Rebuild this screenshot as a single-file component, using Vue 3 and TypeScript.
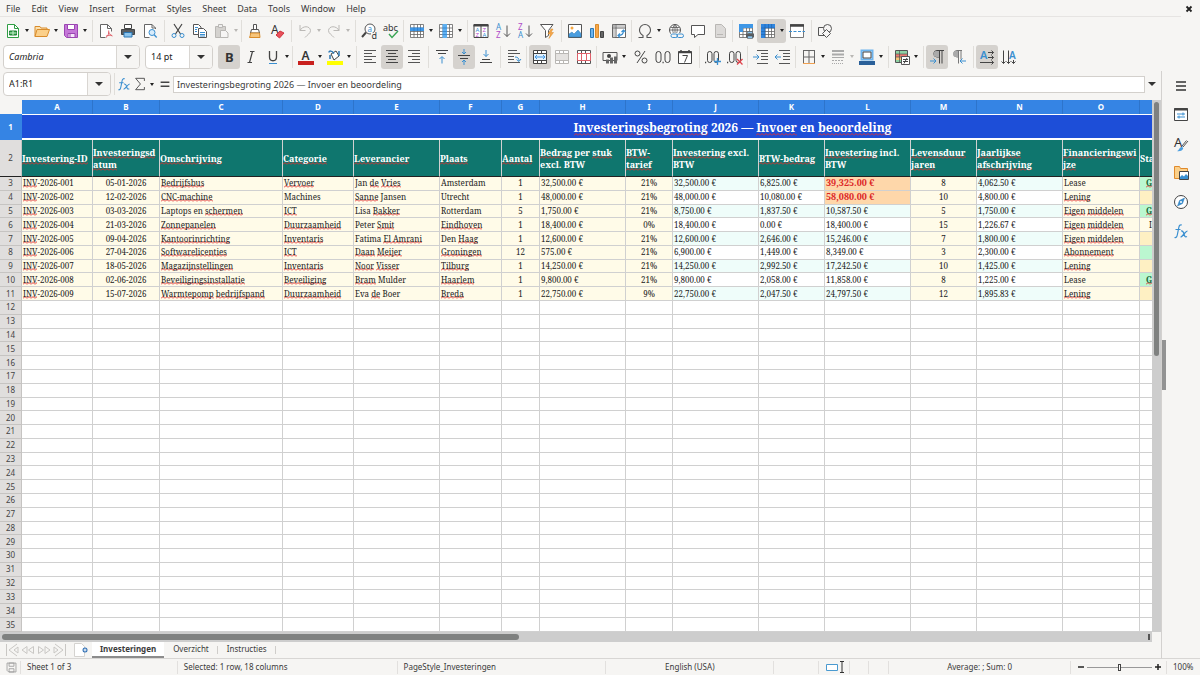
<script setup lang="ts">
interface Tool {
  icon?: string
  label?: string
  arrow?: boolean
  active?: boolean
  dim?: boolean
  sep?: number
}
interface Piece {
  text: string
  bad: boolean
}
interface Cell {
  text: string
  cls: string
}

const menus = ['File', 'Edit', 'View', 'Insert', 'Format', 'Styles', 'Sheet', 'Data', 'Tools', 'Window', 'Help']

const grid = (fill = '') =>
  '<path d="M1.5 1.5h13v13h-13z" fill="#fff"/><path d="M1.5 1.500h13v13h-13zM1.500 5h13M1.500 8.500h13M1.500 11.500h13M5 1.500v13M8.500 1.500v13M11.500 1.500v13" stroke="#666" stroke-width=".8"/>' + fill
const mergeGrid = (c: string, mid: string) =>
  `<path d="M1.5 1.5h13v13h-13zM1.5 4.5h13M1.5 11.5h13M5.5 1.5v3M9.5 1.5v3M5.5 11.5v3M9.5 11.5v3" fill="#fff" stroke="${c}"/>` + mid

const icons: Record<string, string> = {
  new: '<path d="M2.500 1.500h7l4 4v9h-11z" fill="#fff" stroke="#2f9e44"/><path d="M9.500 1.500v4h4" stroke="#2f9e44"/><path d="M4.500 8h7v4h-7z" fill="#2f9e44" stroke="#1f8035"/><path d="M4.500 10h7M8 8v4" stroke="#c9efd0"/>',
  open: '<path d="M1 13.500V3.500h5l1 1.500h6v2" fill="#fbe1b0" stroke="#d98c2b"/><path d="M1 13.500L3 6.500h12.500l-2.500 7z" fill="#fbd08a" stroke="#d98c2b"/>',
  save: '<path d="M1.500 1.500h13v13h-11l-2-2z" fill="#c577d8" stroke="#9b45b2"/><path d="M4.500 1.500h7v5h-7z" fill="#fff" stroke="#9b45b2"/><path d="M5 10.500h7v4H5z" fill="#f6e6fa" stroke="#9b45b2"/><path d="M7 11v3" stroke="#9b45b2"/>',
  pdf: '<path d="M13.500 8.500v-3l-4-4h-7v13h5" fill="#fff" stroke="#666"/><path d="M9.500 1.500v4h4" stroke="#666"/><path d="M8 14.500c2-1.500 3.200-4 2.700-7M10.500 9c.8 2 2 3.500 4 4M8 13.200c2-1 4-1.300 6-.8" stroke="#e0606a"/>',
  print: '<path d="M4.500 1.500h7v4h-7z" fill="#fff" stroke="#444"/><path d="M1.500 6.500h13v5h-13z" fill="#5a5f63" stroke="#444"/><path d="M4 9.500h8v4.500H4z" fill="#8cc4ec" stroke="#2c78b5"/>',
  preview: '<path d="M13.500 6V5l-3.500-3.500H2.500v13h5" fill="#fff" stroke="#666"/><path d="M10 1.500V5h3.500" stroke="#666"/><circle cx="10" cy="9.500" r="3" fill="#d8ecfb" stroke="#3a8fd0"/><path d="M12.200 11.700l2.500 2.800" stroke="#3a8fd0" stroke-width="1.300"/>',
  cut: '<path d="M4 1l6.500 10M12 1L5.500 11" stroke="#444" stroke-width="1.200"/><circle cx="4" cy="12.500" r="2" stroke="#3a8fd0"/><circle cx="12" cy="12.500" r="2" stroke="#3a8fd0"/>',
  copy: '<path d="M1.500 1.500h5l2.500 2.500v7.500H1.500z" fill="#fff" stroke="#555"/><path d="M6.500 5.500h5l3 3v6h-8z" fill="#fff" stroke="#555"/><path d="M3 4.500h3M3 6.500h2M3 8.500h2M8 9.500h5M8 11.500h5M8 13h5" stroke="#3a8fd0"/>',
  paste: '<path d="M1.500 3.500h10v11h-10z" fill="#d4d2cf" stroke="#b9b7b4"/><path d="M4.500 1.500h4v3h-4z" fill="#eee" stroke="#b9b7b4"/><path d="M6.500 7.500h5l2.500 2.500v4.500H6.500z" fill="#f6f5f4" stroke="#b9b7b4"/>',
  brush: '<path d="M6.500 1.500h3v5h-3z" fill="#fff" stroke="#555"/><path d="M4.500 6.500h7l1 3.500h-9z" fill="#fff" stroke="#555"/><path d="M3.500 10h9l.5 4.500H2.500c.8-1.500 1-3 1-4.500z" fill="#f7c57b" stroke="#d98c2b"/>',
  clear: '<text x="2" y="11" font-size="12" fill="#333">A</text><path d="M7 12l4-4 4 2-4.500 5z" fill="#e8515b" stroke="#cf3540"/>',
  undo: '<path d="M3 2v5.500h5.500M3 7.500c2.500-5 10-5 10.500 0 0 3-3 4-5.500 7" stroke="#bbb9b6"/>',
  redo: '<path d="M13 2v5.500H7.500M13 7.500c-2.500-5-10-5-10.500 0 0 3 3 4 5.500 7" stroke="#bbb9b6"/>',
  find: '<circle cx="9" cy="6" r="5" stroke="#555" fill="#fff"/><path d="M5 9.500L1 14" stroke="#444" stroke-width="2"/><text x="6.500" y="8.500" font-size="8" fill="#3a8fd0">a</text><path d="M10 10h6v6h-6z" fill="#f6f5f3"/><text x="10.500" y="15.500" font-size="9" fill="#333">d</text>',
  spell: '<text x="0" y="8" font-size="9" fill="#333">abc</text><path d="M6 11l3 3.500L15 8" stroke="#3aa655" stroke-width="1.400"/>',
  rows: grid('<path d="M1 4.500h14v3.500H1z" fill="#3f97e6"/><path d="M5 4.500V8M8.500 4.500V8M11.500 4.500V8" stroke="#2474c4" stroke-width=".6"/>'),
  cols: grid('<path d="M4.500 1H9v14H4.500z" fill="#5fb0f0"/><path d="M4.500 5H9M4.500 8.500H9M4.500 11.500H9" stroke="#2474c4" stroke-width=".6"/>'),
  sort: '<path d="M1 1.500h14v13H1zM8 1.500v13" fill="#fff" stroke="#444"/><path d="M.5 2.500h15" stroke="#444" stroke-width="2"/><g font-size="6"><text x="2.500" y="9" fill="#3a8fd0">A</text><text x="2.500" y="14" fill="#b04cc8">Z</text><text x="9.500" y="9" fill="#b04cc8">Z</text><text x="9.500" y="14" fill="#3a8fd0">A</text></g>',
  asc: '<text x="1" y="7" font-size="8" fill="#3a8fd0">A</text><text x="1" y="15" font-size="8" fill="#b04cc8">Z</text><path d="M12 2.500v11M9 10.500l3 3 3-3" stroke="#555"/>',
  desc: '<text x="1" y="7" font-size="8" fill="#b04cc8">Z</text><text x="1" y="15" font-size="8" fill="#3a8fd0">A</text><path d="M12 2.500v11M9 10.500l3 3 3-3" stroke="#555"/>',
  filter: '<path d="M1.500 1.500h12.500l-4.500 6v5l-3 2v-7z" fill="#fff" stroke="#555"/><path d="M12 6l-3 5h2.500L10 15.500l4.500-6H12L14 6z" fill="#f7a64a" stroke="#d98c2b" stroke-width=".5"/>',
  image: '<path d="M1.500 1.500h13v13h-13z" fill="#fff" stroke="#555"/><circle cx="5" cy="5" r="1.500" fill="#f5a742"/><path d="M2 14v-3l3-2 2 2 4-4 3 3.500V14z" fill="#4a9ee0" stroke="#2c78b5" stroke-width=".5"/>',
  chart: '<path d="M1.500 5.500h3v9h-3z" fill="#6db4ee" stroke="#2c78b5"/><path d="M6.500 1.500h3v13h-3z" fill="#f7a64a" stroke="#d98c2b"/><path d="M11.500 8.500h3v6h-3z" fill="#666" stroke="#444"/>',
  pivot: '<path d="M1.500 1.500h13v13h-13zM1.500 5h13M5 1.500v13" fill="#fff" stroke="#666"/><path d="M1.500 3h13M3 1.500v13" stroke="#999"/><path d="M7.500 12.500c3.500 0 5-2 5-5M10.500 9l2-2 2 2M9 10.500l-2 2 2 2" stroke="#3a8fd0" stroke-width="1.200"/>',
  omega: '<path d="M1.500 14.500H6v-2C3.500 11 2.500 9 2.500 7a5.500 5.500 0 0 1 11 0c0 2-1 4-3.500 5.500v2h4.500" stroke="#555" stroke-width="1.100"/>',
  link: '<circle cx="7" cy="7" r="5.500" fill="#fff" stroke="#555"/><path d="M1.500 7h11M7 1.500v11M7 1.500c-3 3-3 8 0 11M7 1.500c3 3 3 8 0 11M2.500 4.500h9" stroke="#555" stroke-width=".8"/><path d="M3 10h13v5.500H3z" fill="#f6f5f4"/><rect x="3" y="11" width="6.500" height="3.500" rx="1.700" stroke="#3a8fd0"/><rect x="9" y="11" width="6.500" height="3.500" rx="1.700" stroke="#3a8fd0"/>',
  comment: '<path d="M1.500 2.500h13v9H8L4.500 14.500v-3h-3z" fill="#fff" stroke="#555"/>',
  page: '<path d="M3.500 1.500h6l4 4v9h-10z" fill="#dcdad8" stroke="#b9b7b4"/><path d="M5 11.500h6" stroke="#b9b7b4"/>',
  headers: grid('<path d="M1 1h14v4H1zM1 5h4v4H1z" fill="#3f97e6"/>') + '<path d="M8 10.500h8v4H8z" fill="#5a5f63"/><path d="M9.500 8.500h5v2h-5zM9.500 13h5v2.500h-5z" fill="#8cc4ec" stroke="#444" stroke-width=".5"/>',
  freeze: grid('<path d="M1 1h14v4H1zM1 1h4v14H1z" fill="#2f85de"/><path d="M5 1v14M8.500 1v4M11.500 1v4M1 5h14M1 8.500h4M1 11.500h4" stroke="#1c5fa8" stroke-width=".6"/>'),
  split: '<path d="M1.500 1.500h13v13h-13z" fill="#fff" stroke="#777"/><path d="M1 2.500h14" stroke="#444" stroke-width="2.500"/><path d="M0 8.500h16" stroke="#3a8fd0" stroke-dasharray="3 1.500"/>',
  draw: '<path d="M1.500 4.500h8v8h-8z" fill="#f6f5f4" stroke="#555"/><circle cx="10.500" cy="5.500" r="4" fill="#f6f5f4" stroke="#555"/><path d="M9.500 6.500l4 4-4 4-4-4z" fill="#f6f5f4" stroke="#555"/>',
  bold: '<text x="4" y="13" font-size="13" font-weight="700" fill="#333">B</text>',
  italic: '<path d="M7 2.500h4.500M4.500 13.500H9M9.500 2.500l-3 11" stroke="#444" stroke-width="1.200"/>',
  underline: '<path d="M4.500 2v6c0 5 7 5 7 0V2" stroke="#444" stroke-width="1.300"/><path d="M4 14.500h8" stroke="#3a8fd0"/>',
  fontColor: '<text x="3.500" y="10.500" font-size="12" font-weight="600" fill="#333">A</text><path d="M0 12h16v4H0z" fill="#c9211e"/>',
  highlight: '<path d="M4 5l5-3 3 5-5 4z" fill="#fff" stroke="#444"/><path d="M2 3.500c0-2 3-2 5 1M12 2v5" stroke="#2c78b5" stroke-width="1.500"/><path d="M3 6v4" stroke="#2c78b5" stroke-width="1.500"/><path d="M0 12h16v4H0z" fill="#ffff00"/>',
  left: '<path d="M2 1.500h12M2 4.500h8M2 7.500h12M2 10.500h8M2 13.500h12" stroke="#555"/>',
  center: '<path d="M2 1.500h12M4 4.500h8M2 7.500h12M4 10.500h8M2 13.500h12" stroke="#444"/>',
  right: '<path d="M2 1.500h12M6 4.500h8M2 7.500h12M6 10.500h8M2 13.500h12" stroke="#555"/>',
  top: '<path d="M2 1.500h12M4 4.500h8" stroke="#444"/><path d="M8 14.500V8M5.500 10L8 7.500l2.500 2.500" stroke="#3a8fd0"/>',
  middle: '<path d="M2 6.500h12M4 9.500h8" stroke="#444"/><path d="M8 0v4.500M6 3l2 2 2-2M8 16v-4.500M6 13l2-2 2 2" stroke="#3a8fd0"/>',
  bottom: '<path d="M4 10.500h8M2 13.500h12" stroke="#444"/><path d="M8 1v6.500M5.500 5L8 7.500 10.500 5" stroke="#3a8fd0"/>',
  wrap: '<path d="M2 1.500h9M2 4.500h12M2 7.500h6M2 10.500h6M2 13.500h12" stroke="#555"/><path d="M9 8c3 0 4 1.500 4 4M10.500 10.500l2.500 2 2-2.500" stroke="#3a8fd0"/>',
  merge: mergeGrid('#444', '<path d="M2 5h12v6H2z" fill="#e4f2fd"/><path d="M3 8h10M5 6L3 8l2 2M11 6l2 2-2 2" stroke="#3f97e6"/>'),
  mergeCells: mergeGrid('#b9b7b4', '<path d="M2 5h12v6H2z" fill="#e4e2e0"/>'),
  unmerge: mergeGrid('#555', '<path d="M1.500 4.500h13v7h-13zM5.500 4.500v7M10.500 4.500v7" fill="#fff" stroke="#e0606a"/>'),
  currency: '<path d="M1 3.500h14v8H1z" stroke="#555"/><circle cx="7" cy="7" r="2" fill="#444"/><path d="M4 10.500h3v4H4zM8 8.500h3v6H8zM12 7.500h3v7h-3z" fill="#666"/>',
  percent: '<circle cx="4.500" cy="4.500" r="2.500" stroke="#444"/><circle cx="11.500" cy="11.500" r="2.500" stroke="#444"/><path d="M12 2L4 14" stroke="#444"/>',
  number: '<rect x="1" y="2.500" width="5" height="11" rx="2.500" stroke="#444"/><rect x="10" y="2.500" width="5" height="11" rx="2.500" stroke="#444"/><path d="M7.500 13.500h1.200" stroke="#444" stroke-width="1.500"/>',
  date: '<path d="M1.500 2.500h13v12h-13z" fill="#fff" stroke="#444"/><path d="M1 3.500h14M4 1v3M12 1v3" stroke="#444" stroke-width="1.500"/><path d="M5.500 6.500h5l-3 7" stroke="#444"/>',
  addDec: '<path d="M0 13.500h1.200" stroke="#444" stroke-width="1.500"/><rect x="2.500" y="2.500" width="4.500" height="11" rx="2.200" stroke="#444"/><rect x="9" y="2.500" width="4.500" height="11" rx="2.200" stroke="#444"/><path d="M12.500 9v7M9 12.500h7" stroke="#3a8fd0" stroke-width="1.300"/>',
  delDec: '<path d="M0 13.500h1.200" stroke="#444" stroke-width="1.500"/><rect x="2.500" y="2.500" width="4.500" height="11" rx="2.200" stroke="#444"/><rect x="9" y="2.500" width="4.500" height="11" rx="2.200" stroke="#444"/><path d="M10 10l5.500 5.500M15.500 10L10 15.500" stroke="#e0424b" stroke-width="1.300"/>',
  indent: '<path d="M4 1.500h11M8 4.500h7M8 7.500h7M8 10.500h7M4 14.500h11" stroke="#555"/><path d="M0 8h5.500M3.500 5.500L6 8l-2.500 2.500" stroke="#3a8fd0"/>',
  outdent: '<path d="M4 1.500h11M8 4.500h7M8 7.500h7M8 10.500h7M4 14.500h11" stroke="#555"/><path d="M.5 8H6M2.500 5.500L0 8l2.500 2.500" stroke="#3a8fd0"/>',
  borders: '<path d="M2.500 1.500v13M2 1.500h12M13.500 1.500v13M8 1.500v13M2 8h12" stroke="#666"/><path d="M2 14.500h12" stroke="#f0a050"/>',
  lineStyle: '<path d="M2 2h12M2 5.500h12" stroke="#aaa" stroke-width="2"/><path d="M2 8.500h12" stroke="#aaa"/><path d="M2 11.500h12" stroke="#aaa" stroke-dasharray="2 1"/><path d="M2 14.500h12" stroke="#aaa" stroke-dasharray="1 1"/>',
  lineColor: '<path d="M2.500 1.500h11v9h-11z" fill="#fff" stroke="#6db4ee" stroke-width="2"/><path d="M4 3h8v6H4z" stroke="#444"/><path d="M0 12h16v4H0z" fill="#2a6099"/>',
  conditional: '<path d="M1.500 1.500h12v12h-12z" fill="#fff" stroke="#555"/><path d="M2 2h11v3H2z" fill="#8fd3a4"/><path d="M2 5h11v3H2z" fill="#ec7b72"/><path d="M2 8h6v3H2z" fill="#f7c57b"/><path d="M2 11h5v2H2z" fill="#8fd3a4"/><path d="M5.500 1.500v12M1.500 5h12M1.500 8h12" stroke="#555" stroke-width=".7"/><path d="M7.500 7.500h8v8h-8z" fill="#fff" stroke="#555"/><path d="M9 10.500h5M9 12.500h5M13 9l-3 5.500" stroke="#444"/>',
  ltr: '<path d="M15 1.500H8a3 3 0 0 0 0 6.500h2M10.500 1.500v13M13 1.500v13" stroke="#444"/><path d="M7.500 2a3 3 0 0 0 0 6h2.500V2z" fill="#aaa"/><path d="M1 12h5.500M4.500 9.500L7 12l-2.500 2.500" stroke="#3a8fd0"/>',
  rtl: '<path d="M11 1.500H6a3 3 0 0 0 0 6.500h1M7.500 1.500v13M10 1.500v9" stroke="#777"/><path d="M5 2a3 3 0 0 0 0 6h2V2z" fill="#aaa"/><path d="M15 12H9.500M11.500 9.500L9 12l2.500 2.500" stroke="#3a8fd0"/>',
  horiz: '<text x="1" y="10" font-size="11" font-weight="600" fill="#3a8fd0">A</text><path d="M9 3.500h5.500M12.500 1.500l2 2-2 2M9 8.500h5.500M12.500 6.500l2 2-2 2M1 13.500h13.500M12.500 11.500l2 2-2 2" stroke="#444"/>',
  vert: '<text x="8" y="10" font-size="10" font-weight="600" fill="#3a8fd0">A</text><path d="M2.500 1.500v13M.5 12.500l2 2 2-2M7.500 1.500v13M5.500 12.500l2 2 2-2M12.500 11v3.500M10.500 12.500l2 2 2-2" stroke="#444"/>',
  fx: '<path d="M1.500 14.500c2 .5 2.500-1 3-3.500l1.300-6.500c.4-2 1.200-3 3-2.500M2.500 6.500h5" stroke="#3a8fd0" stroke-width="1.200"/><path d="M8 8c2-.5 2.500 1 3 3s1 3.500 3 2.500M14.500 8c-2 0-5 6-7 6" stroke="#3a8fd0" stroke-width="1.200"/>',
  sigma: '<path d="M13 4.500v-3H3l5.500 6.500L3 14.500h10v-3" stroke="#444"/>',
  equals: '<path d="M3 6h10M3 10.500h10" stroke="#444" stroke-width="1.800"/>',
  menu: '<path d="M3 4h10M3 8h10M3 12h10" stroke="#333" stroke-width="1.500"/>',
  properties: '<path d="M1.500 1.500h13v12h-13z" fill="#fff" stroke="#444"/><path d="M1 2.500h14" stroke="#444" stroke-width="2"/><path d="M4 7h8M4 10h8" stroke="#3a8fd0"/><path d="M10 5.500v3M6 8.500v3" stroke="#3a8fd0"/>',
  styles: '<text x="1" y="11" font-size="13" fill="#333">A</text><path d="M15 5l-5 6M13.500 4.500L9 10" stroke="#555"/><path d="M4 15c2 0 2-3.500 4.500-4 1.500 0 2 1 1.500 2-1 2-4 2.500-6 2z" fill="#4a9ee0"/>',
  gallery: '<path d="M1.500 13.500v-12h5l1 2h7v10z" fill="#fbd08a" stroke="#e08a2b"/><path d="M6.500 6.500h9v8h-9z" fill="#fff" stroke="#444"/><path d="M7 14v-2l2-2 2 1.500L13 9l2 2v3z" fill="#3a8fd0"/>',
  navigator: '<circle cx="8" cy="8" r="6.500" fill="#fff" stroke="#444"/><path d="M11.500 4L9.500 9.500 4.500 12l2-5.500z" fill="#3a8fd0" stroke="#2c78b5" stroke-width=".5"/><circle cx="8" cy="8" r="1" fill="#fff"/>',
  first: '<path d="M2.500 2v12M13 2L5 8l8 6" stroke="#c9c7c4"/><path d="M14 5l-4 3 4 3z" stroke="#c9c7c4"/>',
  prev: '<path d="M7 4.500L2 8l5 3.500zM13.500 4.500l-5 3.500 5 3.500z" stroke="#c9c7c4"/>',
  next: '<path d="M9 4.500L14 8l-5 3.500zM2.500 4.500l5 3.500-5 3.500z" stroke="#c9c7c4"/>',
  last: '<path d="M13.500 2v12M3 2l8 6-8 6" stroke="#c9c7c4"/><path d="M2 5l4 3-4 3z" stroke="#c9c7c4"/>',
  addSheet: '<path d="M1.500 1.500h7l3 3v10h-10z" fill="#fff" stroke="#d5d3d0"/><circle cx="12" cy="8" r="2.500" fill="#2f6fb5"/><path d="M12 6.500v3M10.500 8h3" stroke="#fff"/>',
  disk: '<path d="M2.500 2.500h11v11h-9l-2-2z" stroke="#999"/><path d="M5 2.500h6v4H5zM5 9.500h6v4H5z" stroke="#999"/>',
}

const t = (icon: string, label: string, extra: Partial<Tool> = {}): Tool => ({ icon, label, ...extra })
const sep = (n: number): Tool => ({ sep: n })
const a = { arrow: true }

const standardTools: Tool[] = [
  t('new', 'New', a), t('open', 'Open', a), t('save', 'Save', a), sep(6),
  t('pdf', 'Export as PDF'), t('print', 'Print'), t('preview', 'Print preview'), sep(6),
  t('cut', 'Cut'), t('copy', 'Copy'), t('paste', 'Paste', { arrow: true, dim: true }), sep(4),
  t('brush', 'Clone formatting'), t('clear', 'Clear formatting'), sep(6),
  t('undo', 'Undo', { arrow: true, dim: true }), t('redo', 'Redo', { arrow: true, dim: true }), sep(6),
  t('find', 'Find and replace'), t('spell', 'Spelling'), sep(4),
  t('rows', 'Row', a), t('cols', 'Column', a), sep(6),
  t('sort', 'Sort'), t('asc', 'Sort ascending'), t('desc', 'Sort descending'), t('filter', 'AutoFilter'), sep(6),
  t('image', 'Image'), t('chart', 'Chart'), t('pivot', 'Pivot table'), sep(4),
  t('omega', 'Special character', a), sep(2), t('link', 'Hyperlink'), t('comment', 'Comment'), t('page', 'Headers and footers'), sep(4),
  t('headers', 'Print area'), t('freeze', 'Freeze rows and columns', { arrow: true, active: true }), t('split', 'Split window'), sep(6),
  t('draw', 'Show draw functions'),
]

const formatTools: Tool[] = [
  t('bold', 'Bold', { active: true }), t('italic', 'Italic'), t('underline', 'Underline', a), sep(4),
  t('fontColor', 'Font color', a), t('highlight', 'Background color', a), sep(6),
  t('left', 'Align left'), t('center', 'Center horizontally', { active: true }), t('right', 'Align right'), sep(6),
  t('top', 'Align top'), t('middle', 'Center vertically', { active: true }), t('bottom', 'Align bottom'), sep(6),
  t('wrap', 'Wrap text'), sep(4),
  t('merge', 'Merge and center', { active: true }), t('mergeCells', 'Merge cells'), t('unmerge', 'Unmerge cells'), sep(4),
  t('currency', 'Currency', a), sep(2), t('percent', 'Percent'), t('number', 'Number'), t('date', 'Date'), sep(6),
  t('addDec', 'Add decimal place'), t('delDec', 'Delete decimal place'), sep(4),
  t('indent', 'Increase indent'), t('outdent', 'Decrease indent'), sep(4),
  t('borders', 'Borders', a), t('lineStyle', 'Border style', { arrow: true, dim: true }), t('lineColor', 'Border color', a), sep(6),
  t('conditional', 'Conditional formatting', a), sep(6),
  t('ltr', 'Left-to-right', { active: true }), t('rtl', 'Right-to-left'), sep(6),
  t('horiz', 'Text direction left to right', { active: true }), t('vert', 'Text direction top to bottom'),
]

const toolbars = [
  { name: 'Standard', tools: standardTools },
  { name: 'Formatting', tools: formatTools },
]

const columns = 'ABCDEFGHIJKLMNOPQR'.split('')

/* Words between tildes carry the spelling mark. */
const pieces = (s: string): Piece[] =>
  s.split('~').map((text, i) => ({ text, bad: i % 2 === 1 })).filter((p) => p.text)

const title = '~Investeringsbegroting~ 2026 — ~Invoer~ en ~beoordeling~'
const heads: string[][] = [
  ['~Investering-ID~'], ['~Investeringsd~', '~atum~'], ['~Omschrijving~'], ['~Categorie~'], ['~Leverancier~'],
  ['~Plaats~'], ['~Aantal~'], ['~Bedrag~ per ~stuk~', 'excl. BTW'], ['~BTW-~', '~tarief~'],
  ['~Investering~ excl.', 'BTW'], ['~BTW-bedrag~'], ['~Investering~ incl.', 'BTW'], ['~Levensduur~', '~jaren~'],
  ['~Jaarlijkse~', '~afschrijving~'], ['~Financieringswi~', '~jze~'], ['Status'], [], [],
]

const raw: string[] = [
  '001|05-01-2026|~Bedrijfsbus~|~Vervoer~|Jan ~de~ ~Vries~|Amsterdam|1|32,500.00 €|21%|32,500.00 €|6,825.00 €|39,325.00 €|8|4,062.50 €|Lease|~Goedgekeurd~',
  '002|12-02-2026|~CNC-machine~|Machines|~Sanne~ Jansen|Utrecht|1|48,000.00 €|21%|48,000.00 €|10,080.00 €|58,080.00 €|10|4,800.00 €|~Lening~|',
  '003|03-03-2026|Laptops en ~schermen~|~ICT~|Lisa ~Bakker~|Rotterdam|5|1,750.00 €|21%|8,750.00 €|1,837.50 €|10,587.50 €|5|1,750.00 €|~Eigen~ ~middelen~|~Goedgekeurd~',
  '004|21-03-2026|~Zonnepanelen~|~Duurzaamheid~|Peter ~Smit~|~Eindhoven~|1|18,400.00 €|0%|18,400.00 €|0.00 €|18,400.00 €|15|1,226.67 €|~Eigen~ ~middelen~|In',
  '005|09-04-2026|~Kantoorinrichting~|~Inventaris~|Fatima ~El Amrani~|Den ~Haag~|1|12,600.00 €|21%|12,600.00 €|2,646.00 €|15,246.00 €|7|1,800.00 €|~Eigen~ ~middelen~|',
  '006|27-04-2026|~Softwarelicenties~|~ICT~|~Daan~ ~Meijer~|~Groningen~|12|575.00 €|21%|6,900.00 €|1,449.00 €|8,349.00 €|3|2,300.00 €|~Abonnement~|',
  '007|18-05-2026|~Magazijnstellingen~|~Inventaris~|~Noor~ ~Visser~|~Tilburg~|1|14,250.00 €|21%|14,250.00 €|2,992.50 €|17,242.50 €|10|1,425.00 €|~Lening~|',
  '008|02-06-2026|~Beveiligingsinstallatie~|~Beveiliging~|~Bram~ Mulder|~Haarlem~|1|9,800.00 €|21%|9,800.00 €|2,058.00 €|11,858.00 €|8|1,225.00 €|Lease|~Goedgekeurd~',
  '009|15-07-2026|~Warmtepomp~ ~bedrijfspand~|~Duurzaamheid~|Eva ~de~ Boer|~Breda~|1|22,750.00 €|9%|22,750.00 €|2,047.50 €|24,797.50 €|12|1,895.83 €|~Lening~|',
]
const statusTone = ['go', 'wait', 'go', 'cream', 'wait', 'go', 'wait', 'go', 'wait']

const rows: Cell[][] = Array.from({ length: 33 }, (_, r) => {
  const line = raw[r]
  if (!line) return columns.map(() => ({ text: '', cls: '' }))
  const values = line.split('|')
  values[0] = '~INV~-2026-' + values[0]
  return columns.map((c, i) => {
    const cls: string[] = []
    if ('BGIM'.includes(c)) cls.push('mid')
    if ('JKLN'.includes(c)) cls.push(r % 2 === 0 ? 'mint' : 'plain')
    else if (c === 'P') cls.push('state', statusTone[r])
    else cls.push('cream')
    if (c === 'L' && r < 2) cls.push('over')
    return { text: values[i] ?? '', cls: cls.join(' ') }
  })
})

const sheets = ['Investeringen', 'Overzicht', 'Instructies']
const panels = [
  ['properties', 'Properties'], ['styles', 'Styles'], ['gallery', 'Gallery'], ['navigator', 'Navigator'], ['fx', 'Functions'],
]
</script>

<template>
  <div class="app">
    <header class="menubar">
      <nav class="menus">
        <button v-for="m in menus" :key="m" type="button">{{ m }}</button>
      </nav>
      <button class="close" type="button" aria-label="Close document">
        <svg viewBox="0 0 8 8"><path d="M1.500 1.500l5 5M6.500 1.500l-5 5" stroke="#222" stroke-width="1.800" /></svg>
      </button>
    </header>

    <div v-for="bar in toolbars" :key="bar.name" class="toolbar" :class="bar.name.toLowerCase()" role="toolbar" :aria-label="bar.name">
      <template v-if="bar.name === 'Formatting'">
        <div class="combo font">
          <input type="text" value="Cambria" aria-label="Font name" />
          <button type="button" aria-label="Font list"><i class="caret big"></i></button>
        </div>
        <div class="combo size">
          <input type="text" value="14 pt" aria-label="Font size" />
          <button type="button" aria-label="Size list"><i class="caret big"></i></button>
        </div>
      </template>
      <template v-for="(tool, i) in bar.tools" :key="i">
        <span v-if="tool.sep" class="sep" :class="'s' + tool.sep"></span>
        <button v-else type="button" class="tool" :class="{ split: tool.arrow, active: tool.active, dim: tool.dim }" :aria-label="tool.label">
          <svg viewBox="0 0 16 16" v-html="icons[tool.icon!]"></svg>
          <i v-if="tool.arrow" class="caret"></i>
        </button>
      </template>
    </div>

    <div class="work">
      <main class="main">
        <div class="formula">
          <div class="combo name">
            <input type="text" value="A1:R1" aria-label="Name box" />
            <button type="button" aria-label="Name list"><i class="caret big"></i></button>
          </div>
          <span class="sep s6"></span>
          <button type="button" class="fbtn" aria-label="Function wizard"><svg viewBox="0 0 16 16" v-html="icons.fx"></svg></button>
          <button type="button" class="fbtn wide" aria-label="Select function"><svg viewBox="0 0 16 16" v-html="icons.sigma"></svg><i class="caret"></i></button>
          <button type="button" class="fbtn last" aria-label="Formula"><svg viewBox="0 0 16 16" v-html="icons.equals"></svg></button>
          <input class="content" type="text" value="Investeringsbegroting 2026 — Invoer en beoordeling" aria-label="Input line" />
          <button type="button" class="expand" aria-label="Expand formula bar"><i class="caret big"></i></button>
        </div>

        <div class="sheetarea">
          <div class="sheet">
            <table>
              <colgroup>
                <col class="c-head" />
                <col v-for="c in columns" :key="c" :class="'c-' + c" />
              </colgroup>
              <thead>
                <tr>
                  <td class="corner"></td>
                  <th v-for="c in columns" :key="c" scope="col">{{ c }}</th>
                </tr>
              </thead>
              <tbody>
                <tr class="title">
                  <th scope="row">1</th>
                  <td :colspan="columns.length">
                    <span v-for="(p, i) in pieces(title)" :key="i" :class="{ bad: p.bad }">{{ p.text }}</span>
                  </td>
                </tr>
                <tr class="heads">
                  <th scope="row">2</th>
                  <td v-for="(h, i) in heads" :key="i">
                    <div v-for="(line, j) in h" :key="j">
                      <span v-for="(p, k) in pieces(line)" :key="k" :class="{ bad: p.bad }">{{ p.text }}</span>
                    </div>
                  </td>
                </tr>
                <tr v-for="(row, r) in rows" :key="r" class="body">
                  <th scope="row">{{ r + 3 }}</th>
                  <td v-for="(cell, i) in row" :key="i" :class="cell.cls">
                    <span v-for="(p, k) in pieces(cell.text)" :key="k" :class="{ bad: p.bad }">{{ p.text }}</span>
                  </td>
                </tr>
              </tbody>
            </table>
          </div>
          <div class="vscroll"><div class="thumb"></div></div>
        </div>
        <div class="hscroll"><div class="thumb"></div><i class="grip"></i></div>

        <nav class="tabs">
          <button v-for="n in ['first', 'prev', 'next', 'last']" :key="n" type="button" class="nav" :aria-label="n + ' sheet'">
            <svg viewBox="0 0 16 16" v-html="icons[n]"></svg>
          </button>
          <button type="button" class="add" aria-label="Add sheet"><svg viewBox="0 0 16 16" v-html="icons.addSheet"></svg></button>
          <button v-for="(s, i) in sheets" :key="s" type="button" class="tab" :class="{ current: i === 0 }">{{ s }}</button>
        </nav>
      </main>

      <aside class="sidebar">
        <i class="handle"></i>
        <button type="button" aria-label="Sidebar settings"><svg viewBox="0 0 16 16" v-html="icons.menu"></svg></button>
        <button v-for="p in panels" :key="p[0]" type="button" :aria-label="p[1]"><svg viewBox="0 0 16 16" v-html="icons[p[0]]"></svg></button>
      </aside>
    </div>

    <footer class="status">
      <span class="mid"><svg class="disk" viewBox="0 0 16 16" v-html="icons.disk"></svg></span>
      <span>Sheet 1 of 3</span>
      <span>Selected: 1 row, 18 columns</span>
      <span>PageStyle_Investeringen</span>
      <span class="mid">English (USA)</span>
      <span></span>
      <span class="mode">
        <svg viewBox="0 0 22 12"><path d="M1.500 3.500h11v6h-11z" fill="#fff" stroke="#4a9ad0" /><path d="M15 .5h4M15 11.500h4M17 .5v11" stroke="#333" /></svg>
      </span>
      <span></span>
      <span></span>
      <span class="mid">Average: ; Sum: 0</span>
      <span class="zoom">
        <button type="button" aria-label="Zoom out"><svg viewBox="0 0 8 8"><path d="M1 4h6" stroke="#222" stroke-width="1.500" /></svg></button>
        <input type="range" min="0" max="100" value="50" aria-label="Zoom" />
        <button type="button" aria-label="Zoom in"><svg viewBox="0 0 8 8"><path d="M1 4h6M4 1v6" stroke="#222" stroke-width="1.500" /></svg></button>
      </span>
      <span class="pct">100%</span>
    </footer>
  </div>
</template>

<style>
html,
body {
  margin: 0;
  overflow: hidden;
}
</style>

<style scoped>
.app {
  height: 100vh;
  display: flex;
  flex-direction: column;
  background: #f6f5f3;
  color: #3a3a3a;
  font-family: "Noto Sans", "Open Sans", sans-serif;
  font-size: 8px;
  line-height: 12px;
}
.app * {
  box-sizing: border-box;
}
button,
input {
  font: inherit;
  color: inherit;
  margin: 0;
  padding: 0;
  border: 0;
  background: none;
  border-radius: 0;
  min-width: 0;
  outline: 0;
}
svg {
  width: 16px;
  height: 16px;
  fill: none;
  flex: none;
  display: block;
  overflow: visible;
}
.menubar {
  height: 17px;
  flex: none;
  display: flex;
  justify-content: space-between;
  align-items: center;
  font-size: 9px;
}
.menus {
  flex: 1;
  height: 17px;
  display: flex;
  border-bottom: 1px solid #e6e4e2;
}
.menus button {
  padding: 1px 5px 0 6px;
}
.close {
  width: 16px;
  display: grid;
  place-items: center;
  margin-right: 3px;
}
.close svg {
  width: 8px;
  height: 8px;
}
.toolbar {
  height: 27px;
  flex: none;
  display: flex;
  align-items: center;
  padding-left: 2px;
}
.formatting {
  padding: 0 0 2px 3px;
}
.tool {
  width: 22px;
  height: 24px;
  flex: none;
  display: flex;
  align-items: center;
  padding-left: 3px;
  border-radius: 3px;
}
.tool.split {
  width: 29px;
}
.tool.active {
  background: #d5d2ce;
}
.caret {
  flex: none;
  width: 0;
  height: 0;
  margin-left: 4px;
  border: 2px solid transparent;
  border-top: 3px solid #222;
  border-bottom: 0;
}
.dim .caret {
  border-top-color: #b9b7b4;
}
.caret.big {
  margin: 0;
  border-width: 4px 4px 0;
  border-top-color: #333;
}
.sep {
  flex: none;
  height: 22px;
  border-right: 1px solid #e0deda;
  margin-right: 2px;
}
.s6 {
  width: 4px;
}
.s4 {
  width: 2px;
}
.s2 {
  width: 0;
  border: 0;
}
.combo {
  flex: none;
  height: 24px;
  display: flex;
  background: #fff;
  border: 1px solid #d3d0cc;
  border-radius: 4px;
  overflow: hidden;
  font-size: 9px;
  color: #222;
}
.combo input {
  flex: 1;
  padding-left: 5px;
}
.combo button {
  width: 23px;
  display: grid;
  place-items: center;
  background: #f6f5f3;
  border-left: 1px solid #d9d6d2;
}
.font {
  width: 137px;
  margin-right: 5px;
  font-style: italic;
}
.size {
  width: 68px;
  margin-right: 5px;
}
.name {
  width: 108px;
}
.work {
  flex: 1;
  min-height: 0;
  display: flex;
}
.main {
  flex: 1;
  min-width: 0;
  display: flex;
  flex-direction: column;
}
.formula {
  height: 29px;
  flex: none;
  display: flex;
  align-items: center;
  padding: 0 4px 3px 3px;
}
.fbtn {
  flex: none;
  width: 16px;
  height: 22px;
  display: flex;
  align-items: center;
}
.fbtn svg {
  width: 14px;
  height: 14px;
}
.fbtn.wide {
  width: 25px;
}
.fbtn.last {
  width: 15px;
}
.fbtn .caret {
  margin-left: 3px;
}
.content {
  flex: 1;
  height: 17px;
  margin: 0 2px 0 0;
  padding: 0 3px;
  background: #fff;
  border: 1px solid #d3d0cc;
  font-size: 9px;
}
.expand {
  width: 10px;
  display: grid;
  place-items: center;
}
.sheetarea {
  flex: 1;
  min-height: 0;
  display: flex;
}
.sheet {
  flex: 1;
  min-width: 0;
  overflow: hidden;
  background: #fff;
}
table {
  table-layout: fixed;
  width: 1443px;
  height: 100%;
  border-collapse: separate;
  border-spacing: 0;
  font-family: "Noto Serif", "DejaVu Serif Condensed", "DejaVu Serif", serif;
  color: #222;
}
.c-head { width: 22px; }
.c-A, .c-D { width: 71px; }
.c-B { width: 67px; }
.c-C { width: 123px; }
.c-E, .c-H, .c-J, .c-L, .c-N { width: 86px; }
.c-F { width: 62px; }
.c-G { width: 38px; }
.c-I { width: 47px; }
.c-K, .c-M { width: 66px; }
.c-O { width: 77px; }
th,
td {
  padding: 0 1px;
  overflow: hidden;
  white-space: nowrap;
  text-align: left;
  vertical-align: middle;
  border-right: 1px solid #d0d0d0;
  border-bottom: 1px solid #d0d0d0;
}
th {
  padding: 0;
  font-family: "Noto Sans", "Open Sans", sans-serif;
  text-align: center;
}
thead tr {
  height: 14px;
}
thead th {
  background: #3584e4;
  color: #fff;
  border-right-color: #2d74cb;
  border-bottom: 0;
}
.corner {
  background: #f6f5f3;
  border-color: #f6f5f3;
}
tbody th {
  background: #e0dedd;
  font-weight: 400;
  color: #444;
  border-color: #c6c4c2;
}
.title {
  height: 26px;
}
.title th {
  background: #3584e4;
  color: #fff;
  font-weight: 700;
  border-color: #3584e4;
}
.title td {
  background: #1d4ed8;
  color: #fff;
  font-size: 12px;
  line-height: 16px;
  font-weight: 700;
  text-align: center;
  padding-top: 2px;
  border: 0 solid #fff;
  border-width: 1px 0 2px;
}
.heads {
  height: 37px;
}
.heads td {
  background: #0f766e;
  color: #fff;
  font-size: 9px;
  font-weight: 700;
  padding: 2px 0 0;
  border-bottom-color: #222;
}
.heads th {
  border-bottom-color: #222;
}
.body td {
  line-height: 12px;
}
.body .mid {
  text-align: center;
}
.cream { background: #fffbe8; }
.mint { background: #effdfa; }
.go { background: #bbf7d0; }
.wait { background: #fef0c3; }
.state {
  padding-left: 6px;
}
.state.cream {
  padding-left: 9px;
}
.state.go {
  color: #166534;
  font-weight: 700;
}
.body .over {
  background: #fed7aa;
  color: #dc2626;
  font-size: 9px;
  font-weight: 700;
}
td span {
  white-space: pre;
}
.bad {
  background: url("data:image/svg+xml,%3Csvg xmlns='http://www.w3.org/2000/svg' width='4' height='3'%3E%3Cpath d='M0 2.500L2 .5 4 2.500' fill='none' stroke='%23e03030'/%3E%3C/svg%3E") repeat-x left bottom 0 / 4px 3px;
}
.vscroll {
  width: 9px;
  flex: none;
  padding: 2px 2px 0;
  background: #cdcdcd;
}
.vscroll .thumb {
  height: 48%;
  border-radius: 3px;
  background: #7f8180;
}
.hscroll {
  height: 10px;
  flex: none;
  margin-right: 9px;
  padding: 2px;
  display: flex;
  justify-content: space-between;
  background: #cdcdcd;
}
.hscroll .thumb {
  width: 45%;
  border-radius: 3px;
  background: #7f8180;
}
.grip {
  width: 2px;
  background: #555;
}
.tabs {
  height: 17px;
  flex: none;
  display: flex;
  padding-left: 4px;
  border-bottom: 1px solid #d8d6d4;
}
.nav {
  width: 16px;
}
.add {
  width: 24px;
  padding-left: 5px;
}
.tab {
  position: relative;
  padding: 0 8px 2px;
}
.tab:not(.current)::after {
  content: "";
  position: absolute;
  right: 0;
  top: 4px;
  height: 8px;
  border-right: 1px solid #cfcdca;
}
.tab + .tab {
  padding: 0 9px 2px;
}
.tab.current {
  font-weight: 700;
  background: #fff;
  border-bottom: 2px solid #8c8c8c;
  padding-bottom: 0;
}
.sidebar {
  position: relative;
  width: 39px;
  flex: none;
  display: flex;
  flex-direction: column;
  align-items: center;
  border-left: 1px solid #d3d1cf;
  border-bottom: 1px solid #d8d6d4;
}
.sidebar button {
  width: 30px;
  height: 29px;
  display: grid;
  place-items: center;
}
.handle {
  position: absolute;
  left: 0;
  top: 50%;
  width: 4px;
  height: 50px;
  margin-top: -25px;
  background: #939393;
}
.status {
  display: grid;
  height: 16px;
  flex: none;
  grid-template-columns: 21px 157fr 220fr 209fr 168fr 45fr 31px 19px 20px 182fr 96px 33px;
  align-items: center;
}
.status > span {
  height: 13px;
  padding: 0 6px;
  border-right: 1px solid #e2e0de;
  white-space: nowrap;
}
.status > .mid {
  text-align: center;
}
.status > span:last-child {
  border: 0;
}
.status > .mid:first-child {
  padding: 0 0 0 5px;
}
.disk {
  width: 13px;
  height: 13px;
}
.mode svg {
  width: 22px;
  height: 12px;
}
.status > .zoom {
  display: flex;
  align-items: center;
  padding: 0 2px 0 4px;
}
.zoom button {
  width: 12px;
  display: grid;
  place-items: center;
}
.zoom svg {
  width: 8px;
  height: 8px;
}
.zoom input {
  flex: 1;
  height: 9px;
  appearance: none;
  background: linear-gradient(#999, #999) center / 100% 1px no-repeat;
}
.zoom input::-webkit-slider-thumb {
  appearance: none;
  width: 3px;
  height: 7px;
  background: #fff;
  border: 1px solid #444;
}
</style>
